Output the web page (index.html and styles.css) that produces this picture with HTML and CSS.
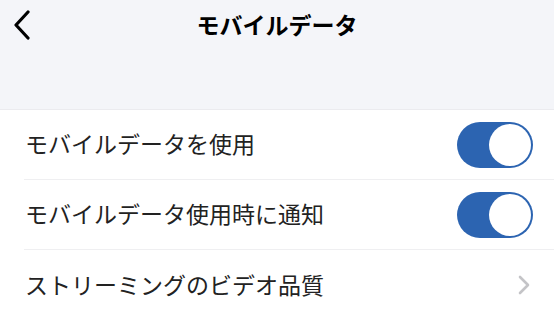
FILE: index.html
```html
<!DOCTYPE html>
<html lang="ja">
<head>
  <meta charset="UTF-8" />
  <meta name="viewport" content="width=device-width, initial-scale=1" />
  <title>モバイルデータ</title>
  <link rel="stylesheet" href="styles.css">
</head>
<body>

  <!-- Header -->
  <header class="top-bar">
    <div class="nav-row">
      <div class="back-btn">
        <svg width="20" height="30" viewBox="0 0 20 30"><path d="M16 2 L4 15 L16 28" fill="none" stroke="#000" stroke-width="3.2" stroke-linecap="round" stroke-linejoin="round"/></svg>
      </div>
      <div class="nav-title">モバイルデータ</div>
      <div class="nav-spacer"></div>
    </div>
  </header>

  <!-- Settings list -->
  <ul class="settings">
    <li class="row">
      <span class="row-label">モバイルデータを使用</span>
      <span class="toggle on"><span class="knob"></span></span>
    </li>
    <li class="row">
      <span class="row-label">モバイルデータ使用時に通知</span>
      <span class="toggle on"><span class="knob"></span></span>
    </li>
    <li class="row">
      <span class="row-label">ストリーミングのビデオ品質</span>
      <svg class="chevron" width="12" height="20" viewBox="0 0 12 20"><path d="M2 2 L10 10 L2 18" fill="none" stroke="#c4c4c7" stroke-width="2.6" stroke-linecap="round" stroke-linejoin="round"/></svg>
    </li>
  </ul>

</body>
</html>
```

FILE: styles.css
```css
* { box-sizing: border-box; margin: 0; padding: 0; }
html, body { height: 100%; }
body {
  background: #fff;
  font-family: "Noto Sans CJK JP", "Noto Sans", sans-serif;
  color: #1c1c1e;
  overflow: hidden;
}

/* ===== Header ===== */
.top-bar { background: #f4f5f9; height: 110px; border-bottom: 1px solid #ebebef; }
.nav-row { display: flex; align-items: center; height: 50px; padding: 0 12px; }
.back-btn { width: 60px; display: flex; align-items: center; }
.back-btn svg { display: block; }
.nav-title { flex: 1; text-align: center; font-size: 23px; font-weight: 700; color: #000; margin-top: -2px; }
.nav-spacer { width: 60px; }

/* ===== Settings list ===== */
.settings { list-style: none; padding-left: 24px; }
.row {
  display: flex;
  align-items: center;
  justify-content: space-between;
  height: 70px;
  padding-right: 21px;
  border-bottom: 1px solid #efeff1;
}
.row:last-child { border-bottom: none; }
.row-label { font-size: 23px; padding-left: 1px; margin-top: -3px; color: #222; }
.chevron { margin-right: 3px; }

/* ===== Toggle ===== */
.toggle { width: 76px; height: 46px; border-radius: 23px; background: #2c64b1; display: flex; align-items: center; justify-content: flex-end; padding: 2px; }
.knob { width: 42px; height: 42px; border-radius: 50%; background: #fff; }
```
